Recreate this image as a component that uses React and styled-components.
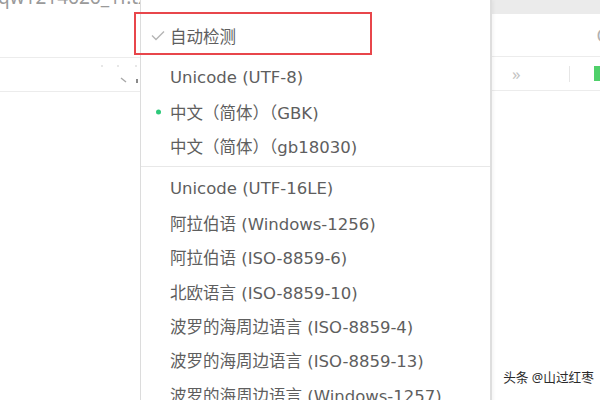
import React from "react";
import styled, { createGlobalStyle } from "styled-components";

const GlobalStyle = createGlobalStyle`
  html, body {
    margin: 0;
    padding: 0;
    background: #ffffff;
    overflow: hidden;
  }
  body {
    font-family: "Noto Sans", "Noto Sans CJK SC", sans-serif;
  }
`;

const Page = styled.div`
  position: relative;
  width: 600px;
  height: 400px;
  display: grid;
  grid-template-columns: 140px 352px 108px;
  overflow: hidden;
  background: #fff;
`;

const LeftPane = styled.div`
  display: flex;
  flex-direction: column;
`;

const FileTitle = styled.div`
  height: 57px;
  border-bottom: 1px solid #ececec;
  overflow: hidden;
  white-space: nowrap;
  font-size: 19px;
  line-height: 19px;
  color: #9a9a9a;
  & > span {
    display: block;
    margin-top: -12px;
    margin-left: -2px;
  }
`;

const TabRow = styled.div`
  height: 33px;
  border-bottom: 1px solid #ececec;
  display: flex;
  justify-content: flex-end;
  align-items: center;
`;

const Menu = styled.div`
  position: relative;
  border-left: 1px solid #dcdcdc;
  border-right: 2px solid #dedede;
  background: #fff;
  padding-top: 16px;
  display: flex;
  flex-direction: column;
  box-shadow: 2px 0 3px rgba(0, 0, 0, 0.04);
`;

const Item = styled.div`
  height: ${(p) => (p.first ? "40px" : "34.4px")};
  margin-bottom: ${(p) => (p.first ? "4px" : "0")};
  display: flex;
  align-items: center;
  padding-left: 29px;
  font-family: "DejaVu Sans", "Noto Sans CJK SC", sans-serif;
  font-size: 16.5px;
  color: #5e5e5e;
  white-space: nowrap;
  position: relative;
`;

const Mark = styled.span`
  position: absolute;
  left: ${(p) => p.left}px;
  top: 50%;
  transform: translateY(-50%);
  display: flex;
`;

const Dot = styled.span`
  width: 5px;
  height: 5px;
  border-radius: 50%;
  background: #2ec97a;
`;

const Separator = styled.div`
  height: 1px;
  background: #e8e8e8;
  margin: 3px 0 4px;
`;

const Highlight = styled.div`
  position: absolute;
  left: -7px;
  top: 12px;
  width: 234px;
  height: 39px;
  border: 2px solid #e8464b;
  pointer-events: none;
`;

const RightPane = styled.div`
  display: flex;
  flex-direction: column;
`;

const TopBand = styled.div`
  height: 14px;
  background: #ebebeb;
`;

const RightHead = styled.div`
  height: 42px;
  border-bottom: 1px solid #ececec;
  display: flex;
  align-items: center;
  justify-content: flex-end;
  font-size: 18px;
  color: #b0b0b0;
  overflow: hidden;
  & > span {
    margin-right: -8px;
  }
`;

const Toolbar = styled.div`
  height: 33px;
  border-bottom: 1px solid #ececec;
  display: flex;
  align-items: center;
  padding-left: 20px;
`;

const Chevrons = styled.span`
  font-size: 17px;
  color: #c4c4c4;
  width: 58px;
`;

const Divider = styled.span`
  width: 1px;
  height: 16px;
  background: #e6e6e6;
  margin-right: 24px;
`;

const GreenTab = styled.span`
  width: 6px;
  height: 15px;
  background: #4fd06a;
`;

const Watermark = styled.div`
  position: absolute;
  right: 6px;
  bottom: 14px;
  font-size: 12.7px;
  color: #2a2a2a;
  text-shadow: 0 0 2px #fff;
  white-space: nowrap;
`;

const items = [
  { label: "Unicode (UTF-8)" },
  { label: "中文（简体）（GBK)", dot: true },
  { label: "中文（简体）（gb18030)" },
  { sep: true },
  { label: "Unicode (UTF-16LE)" },
  { label: "阿拉伯语 (Windows-1256)" },
  { label: "阿拉伯语 (ISO-8859-6)" },
  { label: "北欧语言 (ISO-8859-10)" },
  { label: "波罗的海周边语言 (ISO-8859-4)" },
  { label: "波罗的海周边语言 (ISO-8859-13)" },
  { label: "波罗的海周边语言 (Windows-1257)" },
];

export default function App() {
  return (
    <>
      <GlobalStyle />
      <Page>
        <LeftPane>
          <FileTitle>
            <span>qw1214626_1f.txt</span>
          </FileTitle>
          <TabRow>
            <svg width="44" height="30" viewBox="0 0 44 30">
              <circle cx="6" cy="6" r="0.8" fill="#c8c8c8" />
              <circle cx="22" cy="6" r="0.8" fill="#c8c8c8" />
              <circle cx="40" cy="6" r="0.8" fill="#c8c8c8" />
              <path d="M25 18 L30 22" stroke="#a8a8a8" strokeWidth="1.4" />
              <path d="M41 19 L41 23" stroke="#8a8a8a" strokeWidth="2" />
            </svg>
          </TabRow>
        </LeftPane>

        <Menu>
          <Highlight />
          <Item first>
            <Mark left={10}>
              <svg width="14" height="11" viewBox="0 0 14 11">
                <path
                  d="M1 5 L5 9 L13 1"
                  fill="none"
                  stroke="#b5b5b5"
                  strokeWidth="1.4"
                />
              </svg>
            </Mark>
            自动检测
          </Item>
          {items.map((it, i) =>
            it.sep ? (
              <Separator key={i} />
            ) : (
              <Item key={i}>
                {it.dot && (
                  <Mark left={15}>
                    <Dot />
                  </Mark>
                )}
                {it.label}
              </Item>
            )
          )}
        </Menu>

        <RightPane>
          <TopBand />
          <RightHead>
            <span>C</span>
          </RightHead>
          <Toolbar>
            <Chevrons>»</Chevrons>
            <Divider />
            <GreenTab />
          </Toolbar>
        </RightPane>

        <Watermark>头条 @山过红枣</Watermark>
      </Page>
    </>
  );
}
